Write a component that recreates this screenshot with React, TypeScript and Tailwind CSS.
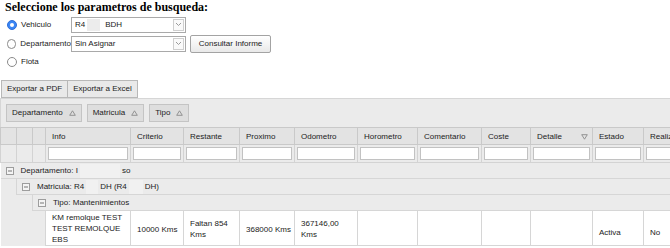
import React from "react";

const cols = [16, 16, 13, 85, 53, 56, 55, 63, 60, 64, 49, 62, 51, 70];
const headers = [
  "Info",
  "Criterio",
  "Restante",
  "Proximo",
  "Odometro",
  "Horometro",
  "Comentario",
  "Coste",
  "Detalle",
  "Estado",
  "Realizado",
];

const Radio = ({ checked }: { checked?: boolean }) =>
  checked ? (
    <span className="w-[10px] h-[10px] rounded-full bg-[#3a86f5] border border-[#2f6fd8] flex items-center justify-center">
      <span className="w-[4px] h-[4px] rounded-full bg-white" />
    </span>
  ) : (
    <span className="w-[10px] h-[10px] rounded-full bg-white border border-[#8a8a8a]" />
  );

const Select = ({ children }: { children: React.ReactNode }) => (
  <div className="w-[115px] h-[16px] border border-[#a9a9a9] bg-white flex items-center justify-between pl-[3px] pr-[1px]">
    <div className="flex items-center">{children}</div>
    <span className="w-[11px] h-[12px] border border-[#cfcfcf] bg-[#fafafa] flex items-center justify-center">
      <svg width="7" height="5" viewBox="0 0 7 5">
        <path d="M1 1l2.5 2.5L6 1" fill="none" stroke="#9a9a9a" strokeWidth="1" />
      </svg>
    </span>
  </div>
);

const Collapse = () => (
  <svg width="8" height="8" viewBox="0 0 8 8" className="shrink-0">
    <rect x="0.5" y="0.5" width="7" height="7" fill="#f4f4f4" stroke="#9d9d9d" />
    <path d="M2 4h4" stroke="#777" strokeWidth="1" />
  </svg>
);

const Chip = ({ label }: { label: string }) => (
  <div className="h-[18px] px-[5px] bg-[#dedede] border border-[#c4c4c4] flex items-center gap-[6px]">
    <span>{label}</span>
    <svg width="7" height="6" viewBox="0 0 7 6">
      <path d="M3.5 0.8L6.3 5.3H0.7Z" fill="none" stroke="#8a8a8a" strokeWidth="0.9" />
    </svg>
  </div>
);

export default function App() {
  return (
    <div className="w-[670px] h-[248px] overflow-hidden bg-white text-[8px] text-[#222] font-['Liberation_Sans',Arial,sans-serif]">
      <h2 className="pl-[5px] h-[15px] leading-[15px] text-[12px] font-bold text-black font-['Liberation_Serif','Times_New_Roman',serif]">
        Seleccione los parametros de busqueda:
      </h2>

      <div className="flex flex-col pl-[7px] mt-[1px]">
        <div className="flex items-center h-[17px]">
          <div className="w-[64px] flex items-center gap-[4px]">
            <Radio checked />
            <span>Vehiculo</span>
          </div>
          <Select>
            <span>R4</span>
            <span className="w-[13px] h-[12px] bg-[#ececec] mx-[2px]" />
            <span className="ml-[3px]">BDH</span>
          </Select>
        </div>
        <div className="flex items-center h-[19px] mt-[1px]">
          <div className="w-[64px] flex items-center gap-[4px]">
            <Radio />
            <span>Departamento</span>
          </div>
          <Select>
            <span>Sin Asignar</span>
          </Select>
          <button className="ml-[4px] w-[81px] h-[18px] border border-[#a3a3a3] rounded-[2px] bg-gradient-to-b from-white to-[#e9e9e9] text-[8px] text-[#222]">
            Consultar Informe
          </button>
        </div>
        <div className="flex items-center h-[17px]">
          <div className="flex items-center gap-[4px]">
            <Radio />
            <span>Flota</span>
          </div>
        </div>
      </div>

      <div className="flex mt-[10px] pl-[1px]">
        <button className="h-[18px] px-[5px] bg-[#e9e9e9] border border-[#b8b8b8] text-[8px] text-[#222]">
          Exportar a PDF
        </button>
        <button className="h-[18px] px-[5px] bg-[#e9e9e9] border border-l-0 border-[#b8b8b8] text-[8px] text-[#222]">
          Exportar a Excel
        </button>
      </div>

      <div className="h-[29px] bg-[#ebebeb] border-t border-l border-[#d6d6d6] flex items-center gap-[5px] pl-[5px] pb-[1px]">
        <Chip label="Departamento" />
        <Chip label="Matricula" />
        <Chip label="Tipo" />
      </div>

      <table className="table-fixed border-collapse w-[713px]">
        <colgroup>
          {cols.map((w, i) => (
            <col key={i} style={{ width: w }} />
          ))}
        </colgroup>
        <thead>
          <tr className="h-[17px] bg-[#e3e3e3]">
            <th className="border border-[#c9c9c9]" />
            <th className="border border-[#c9c9c9]" />
            <th className="border border-[#c9c9c9]" />
            {headers.map((h) => (
              <th
                key={h}
                className="border border-[#c9c9c9] text-left font-normal pl-[6px] pr-[4px] pt-[1px] whitespace-nowrap overflow-hidden"
              >
                {h === "Detalle" ? (
                  <div className="flex items-center justify-between">
                    <span>Detalle</span>
                    <svg width="7" height="6" viewBox="0 0 7 6">
                      <path d="M0.7 0.7H6.3L3.5 5.2Z" fill="none" stroke="#8a8a8a" strokeWidth="0.9" />
                    </svg>
                  </div>
                ) : (
                  h
                )}
              </th>
            ))}
          </tr>
          <tr className="h-[18px] bg-[#ebebeb]">
            <th className="border border-[#d3d3d3]" />
            <th className="border border-[#d3d3d3]" />
            <th className="border border-[#d3d3d3]" />
            {headers.map((h) => (
              <th key={h} className="border border-[#d3d3d3] pl-[2px] pr-[2px] py-0">
                <div className="h-[13px] bg-white border border-[#c2c2c2]" />
              </th>
            ))}
          </tr>
        </thead>
        <tbody>
          <tr className="h-[16px] bg-[#ebebeb]">
            <td colSpan={14} className="border-b border-[#d6d6d6] pl-[5px]">
              <div className="flex items-center gap-[7px]">
                <Collapse />
                <span className="flex items-center">
                  Departamento: I
                  <span className="w-[40px] h-[14px] bg-[#f1f1f1] mx-[2px]" />
                  so
                </span>
              </div>
            </td>
          </tr>
          <tr className="h-[16px] bg-[#ebebeb]">
            <td />
            <td colSpan={13} className="border-b border-l border-[#d6d6d6] pl-[5px]">
              <div className="flex items-center gap-[7px]">
                <Collapse />
                <span className="flex items-center">
                  Matricula: R4
                  <span className="w-[12px] h-[14px] bg-[#f1f1f1] mx-[2px]" />
                  DH (R4
                  <span className="w-[14px] h-[14px] bg-[#f1f1f1] mx-[2px]" />
                  DH)
                </span>
              </div>
            </td>
          </tr>
          <tr className="h-[16px] bg-[#ebebeb]">
            <td />
            <td />
            <td colSpan={12} className="border-b border-l border-[#d6d6d6] pl-[5px]">
              <div className="flex items-center gap-[7px]">
                <Collapse />
                <span>Tipo: Mantenimientos</span>
              </div>
            </td>
          </tr>
          <tr className="h-[35px]">
            <td className="bg-[#ebebeb]" />
            <td className="bg-[#ebebeb]" />
            <td className="bg-[#ebebeb]" />
            <td className="border border-[#d6d6d6] pl-[6px] pr-[4px] leading-[11px] align-middle">
              KM remolque TEST TEST REMOLQUE EBS
            </td>
            <td className="border border-[#d6d6d6] pl-[6px] pt-[2px] leading-[11px]">10000 Kms</td>
            <td className="border border-[#d6d6d6] pl-[6px] pr-[4px] pt-[2px] leading-[11px]">Faltan 854 Kms</td>
            <td className="border border-[#d6d6d6] pl-[6px] pt-[2px] leading-[11px]">368000 Kms</td>
            <td className="border border-[#d6d6d6] pl-[6px] pr-[4px] pt-[2px] leading-[11px]">367146,00 Kms</td>
            <td className="border border-[#d6d6d6]" />
            <td className="border border-[#d6d6d6]" />
            <td className="border border-[#d6d6d6]" />
            <td className="border border-[#d6d6d6]" />
            <td className="border border-[#d6d6d6] pl-[6px] pt-[9px]">Activa</td>
            <td className="border border-[#d6d6d6] pl-[6px] pt-[9px]">No</td>
          </tr>
        </tbody>
      </table>
    </div>
  );
}
